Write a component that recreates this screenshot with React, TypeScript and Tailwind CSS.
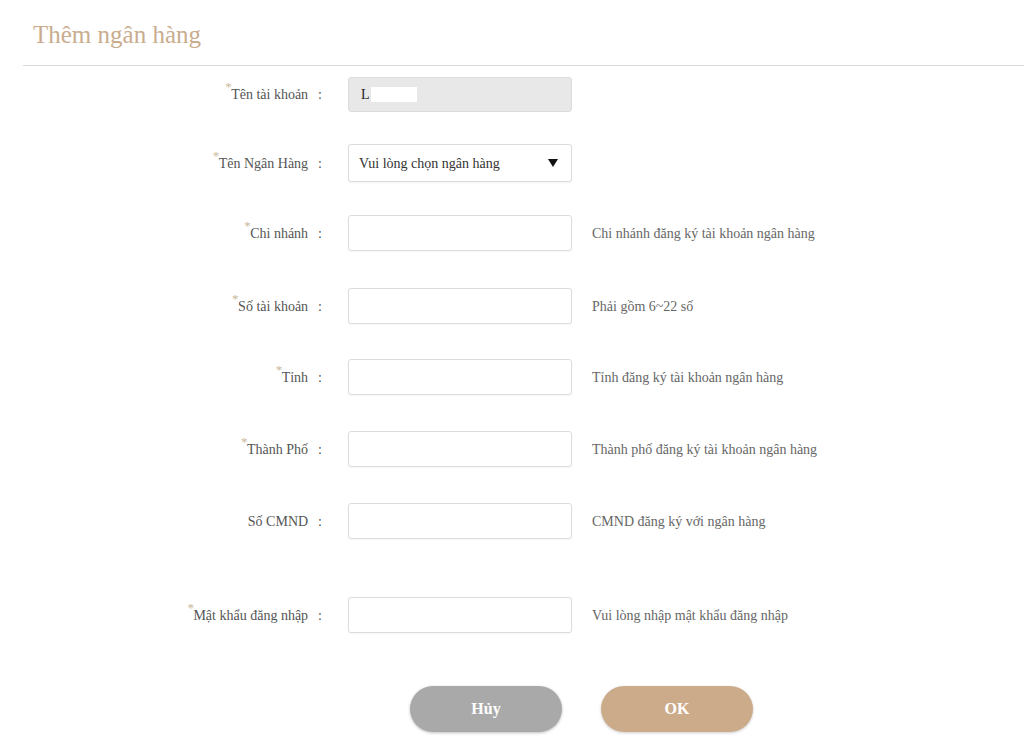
import React from "react";

type Row = {
  label: string;
  required: boolean;
  hint?: string;
  kind: "readonly" | "select" | "text";
  rowClass: string;
};

const rows: Row[] = [
  { label: "Tên tài khoản", required: true, kind: "readonly", rowClass: "mt-[11px] h-[35px]" },
  { label: "Tên Ngân Hàng", required: true, kind: "select", rowClass: "mt-[32px] h-[38px]" },
  { label: "Chi nhánh", required: true, kind: "text", hint: "Chi nhánh đăng ký tài khoản ngân hàng", rowClass: "mt-[33px] h-[36px]" },
  { label: "Số tài khoản", required: true, kind: "text", hint: "Phải gồm 6~22 số", rowClass: "mt-[37px] h-[36px]" },
  { label: "Tỉnh", required: true, kind: "text", hint: "Tỉnh đăng ký tài khoản ngân hàng", rowClass: "mt-[35px] h-[36px]" },
  { label: "Thành Phố", required: true, kind: "text", hint: "Thành phố đăng ký tài khoản ngân hàng", rowClass: "mt-[36px] h-[36px]" },
  { label: "Số CMND", required: false, kind: "text", hint: "CMND đăng ký với ngân hàng", rowClass: "mt-[36px] h-[36px]" },
  { label: "Mật khẩu đăng nhập", required: true, kind: "text", hint: "Vui lòng nhập mật khẩu đăng nhập", rowClass: "mt-[58px] h-[36px]" },
];

function Field({ row }: { row: Row }) {
  if (row.kind === "readonly") {
    return (
      <div className="flex h-full w-[224px] items-center rounded-[3px] border border-[#dcdcdc] bg-[#e8e8e8] pl-[12px] text-[14px] text-[#222]">
        <span>L</span>
        <span className="ml-[1px] inline-block h-[15px] w-[46px] bg-white" />
      </div>
    );
  }
  if (row.kind === "select") {
    return (
      <div className="flex h-full w-[224px] items-center justify-between rounded-[3px] border border-[#dcdcdc] bg-white pl-[10px] pr-[13px] text-[14px] text-[#333] shadow-[0_1px_2px_rgba(0,0,0,0.05)]">
        <span>Vui lòng chọn ngân hàng</span>
        <svg width="10" height="8" viewBox="0 0 10 8">
          <path d="M0 0h10L5 8z" fill="#111" />
        </svg>
      </div>
    );
  }
  return (
    <div className="h-full w-[224px] rounded-[3px] border border-[#dcdcdc] bg-white shadow-[0_1px_2px_rgba(0,0,0,0.04)]" />
  );
}

export default function App() {
  return (
    <div
      className="min-h-screen w-full bg-white"
      style={{ fontFamily: '"Liberation Serif", "Times New Roman", serif' }}
    >
      <div className="h-[65px] pl-[33px] pt-[20px]">
        <h1 className="text-[25px] leading-[30px] text-[#c9ad8e]">Thêm ngân hàng</h1>
      </div>
      <div className="ml-[23px] h-px bg-[#d9d9d9]" />

      <div className="flex flex-col">
        {rows.map((row) => (
          <div key={row.label} className={"flex items-center " + row.rowClass}>
            <div className="flex w-[322px] justify-end text-[14px] text-[#555]">
              <span className="relative">
                {row.required && (
                  <span className="absolute -left-[6px] -top-[7px] text-[13px] text-[#c9b89a]">*</span>
                )}
                {row.label}
              </span>
              <span className="ml-[10px]">:</span>
            </div>
            <div className="ml-[26px] h-full">
              <Field row={row} />
            </div>
            {row.hint && (
              <div className="ml-[20px] text-[14px] text-[#666]">{row.hint}</div>
            )}
          </div>
        ))}
      </div>

      <div className="mt-[53px] flex gap-[39px] pl-[410px]">
        <button className="h-[46px] w-[152px] rounded-full bg-[#a9a9a9] text-[16px] font-bold text-white shadow-[0_1px_3px_rgba(0,0,0,0.25)]">
          Hủy
        </button>
        <button className="h-[46px] w-[152px] rounded-full bg-[#ccab8a] text-[16px] font-bold text-white shadow-[0_1px_3px_rgba(0,0,0,0.2)]">
          OK
        </button>
      </div>
    </div>
  );
}
